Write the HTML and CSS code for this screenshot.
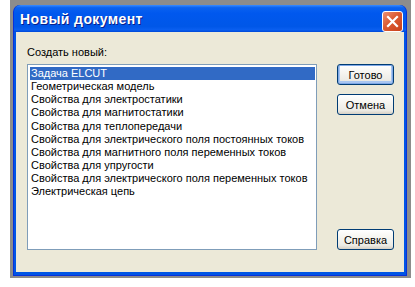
FILE: index.html
```html
<!DOCTYPE html>
<html lang="ru">
<head>
<meta charset="utf-8">
<title>Новый документ</title>
<link rel="stylesheet" href="styles.css">
</head>
<body>
<div class="desk">
  <div class="window">
    <div class="titlebar">
      <span class="title">Новый документ</span>
      <span class="close">
        <svg width="13" height="13" viewBox="0 0 13 13"><path d="M2 2 L11 11 M11 2 L2 11" stroke="#fff" stroke-width="2.2" stroke-linecap="square"/></svg>
      </span>
    </div>
    <div class="content">
      <div class="left">
        <div class="label">Создать новый:</div>
        <div class="listbox">
          <div class="item selected">Задача ELCUT</div>
          <div class="item">Геометрическая модель</div>
          <div class="item">Свойства для электростатики</div>
          <div class="item">Свойства для магнитостатики</div>
          <div class="item">Свойства для теплопередачи</div>
          <div class="item">Свойства для электрического поля постоянных токов</div>
          <div class="item">Свойства для магнитного поля переменных токов</div>
          <div class="item">Свойства для упругости</div>
          <div class="item">Свойства для электрического поля переменных токов</div>
          <div class="item">Электрическая цепь</div>
        </div>
      </div>
      <div class="right">
        <button class="btn default">Готово</button>
        <button class="btn">Отмена</button>
        <div class="spacer"></div>
        <button class="btn">Справка</button>
      </div>
    </div>
  </div>
</div>
</body>
</html>
```
FILE: styles.css
```css
html, body {
  margin: 0;
  padding: 0;
  background: #ffffff;
}
.desk {
  margin-left: 10px;
  width: 401px;
  height: 278px;
  box-sizing: border-box;
  padding: 5px 4px 2px 3px;
  background: #8c8c8c;
}
.window {
  width: 394px;
  height: 271px;
  box-sizing: border-box;
  display: flex;
  flex-direction: column;
  background: #0055e5;
  border-radius: 7px 7px 0 0;
  border: 1px solid #0831d9;
  border-top: none;
  padding: 0 2px 3px 2px;
  overflow: hidden;
}
.titlebar {
  height: 27px;
  margin: 0 -2px;
  padding: 0 3px 0 6px;
  display: flex;
  align-items: flex-start;
  justify-content: space-between;
  background: linear-gradient(to bottom, #3b8cff 0%, #0a62f0 10%, #0058ee 30%, #0057e8 80%, #0a5ff0 92%, #0048d8 100%);
  border-radius: 7px 7px 0 0;
}
.title {
  margin-top: 6px;
  font-family: "Liberation Sans", Arial, sans-serif;
  font-weight: bold;
  font-size: 14px;
  letter-spacing: 0.4px;
  line-height: 17px;
  color: #ffffff;
  text-shadow: 1px 1px 0 #0a1e8a;
}
.close {
  margin-top: 6px;
  width: 19px;
  height: 19px;
  border: 1px solid #ffffff;
  border-radius: 3px;
  background: linear-gradient(135deg, #e99073 0%, #dc5a32 45%, #c8401a 100%);
  display: flex;
  align-items: center;
  justify-content: center;
}
.close svg {
  display: block;
}
.content {
  flex: 1;
  background: #ece9d8;
  display: flex;
  padding: 0 11px 22px 11px;
  gap: 20px;
  font-family: "Liberation Sans", Arial, sans-serif;
  font-size: 11px;
  color: #000000;
}
.left {
  display: flex;
  flex-direction: column;
}
.label {
  height: 32px;
  box-sizing: border-box;
  padding-top: 14px;
  line-height: 13px;
}
.listbox {
  width: 290px;
  height: 186px;
  box-sizing: border-box;
  border: 1px solid #7f9db9;
  background: #ffffff;
  padding: 2px 1px 0 2px;
}
.item {
  height: 13.15px;
  line-height: 13px;
  padding-left: 1px;
  white-space: nowrap;
}
.item.selected {
  background: #316ac5;
  color: #ffffff;
}
.right {
  display: flex;
  flex-direction: column;
  padding-top: 32px;
  width: 57px;
  gap: 9px;
}
.spacer {
  flex: 1;
}
.btn {
  width: 57px;
  height: 21px;
  padding: 0;
  margin: 0;
  border: 1px solid #003c74;
  border-radius: 3px;
  background: linear-gradient(to bottom, #ffffff 0%, #f6f5f0 40%, #ecebe5 80%, #d6d0c5 100%);
  font-family: "Liberation Sans", Arial, sans-serif;
  font-size: 11px;
  color: #000000;
}
.btn.default {
  box-shadow: inset 0 0 0 1px #7fa8e6, inset 0 -1px 0 2px #a9c6f0;
}
```
